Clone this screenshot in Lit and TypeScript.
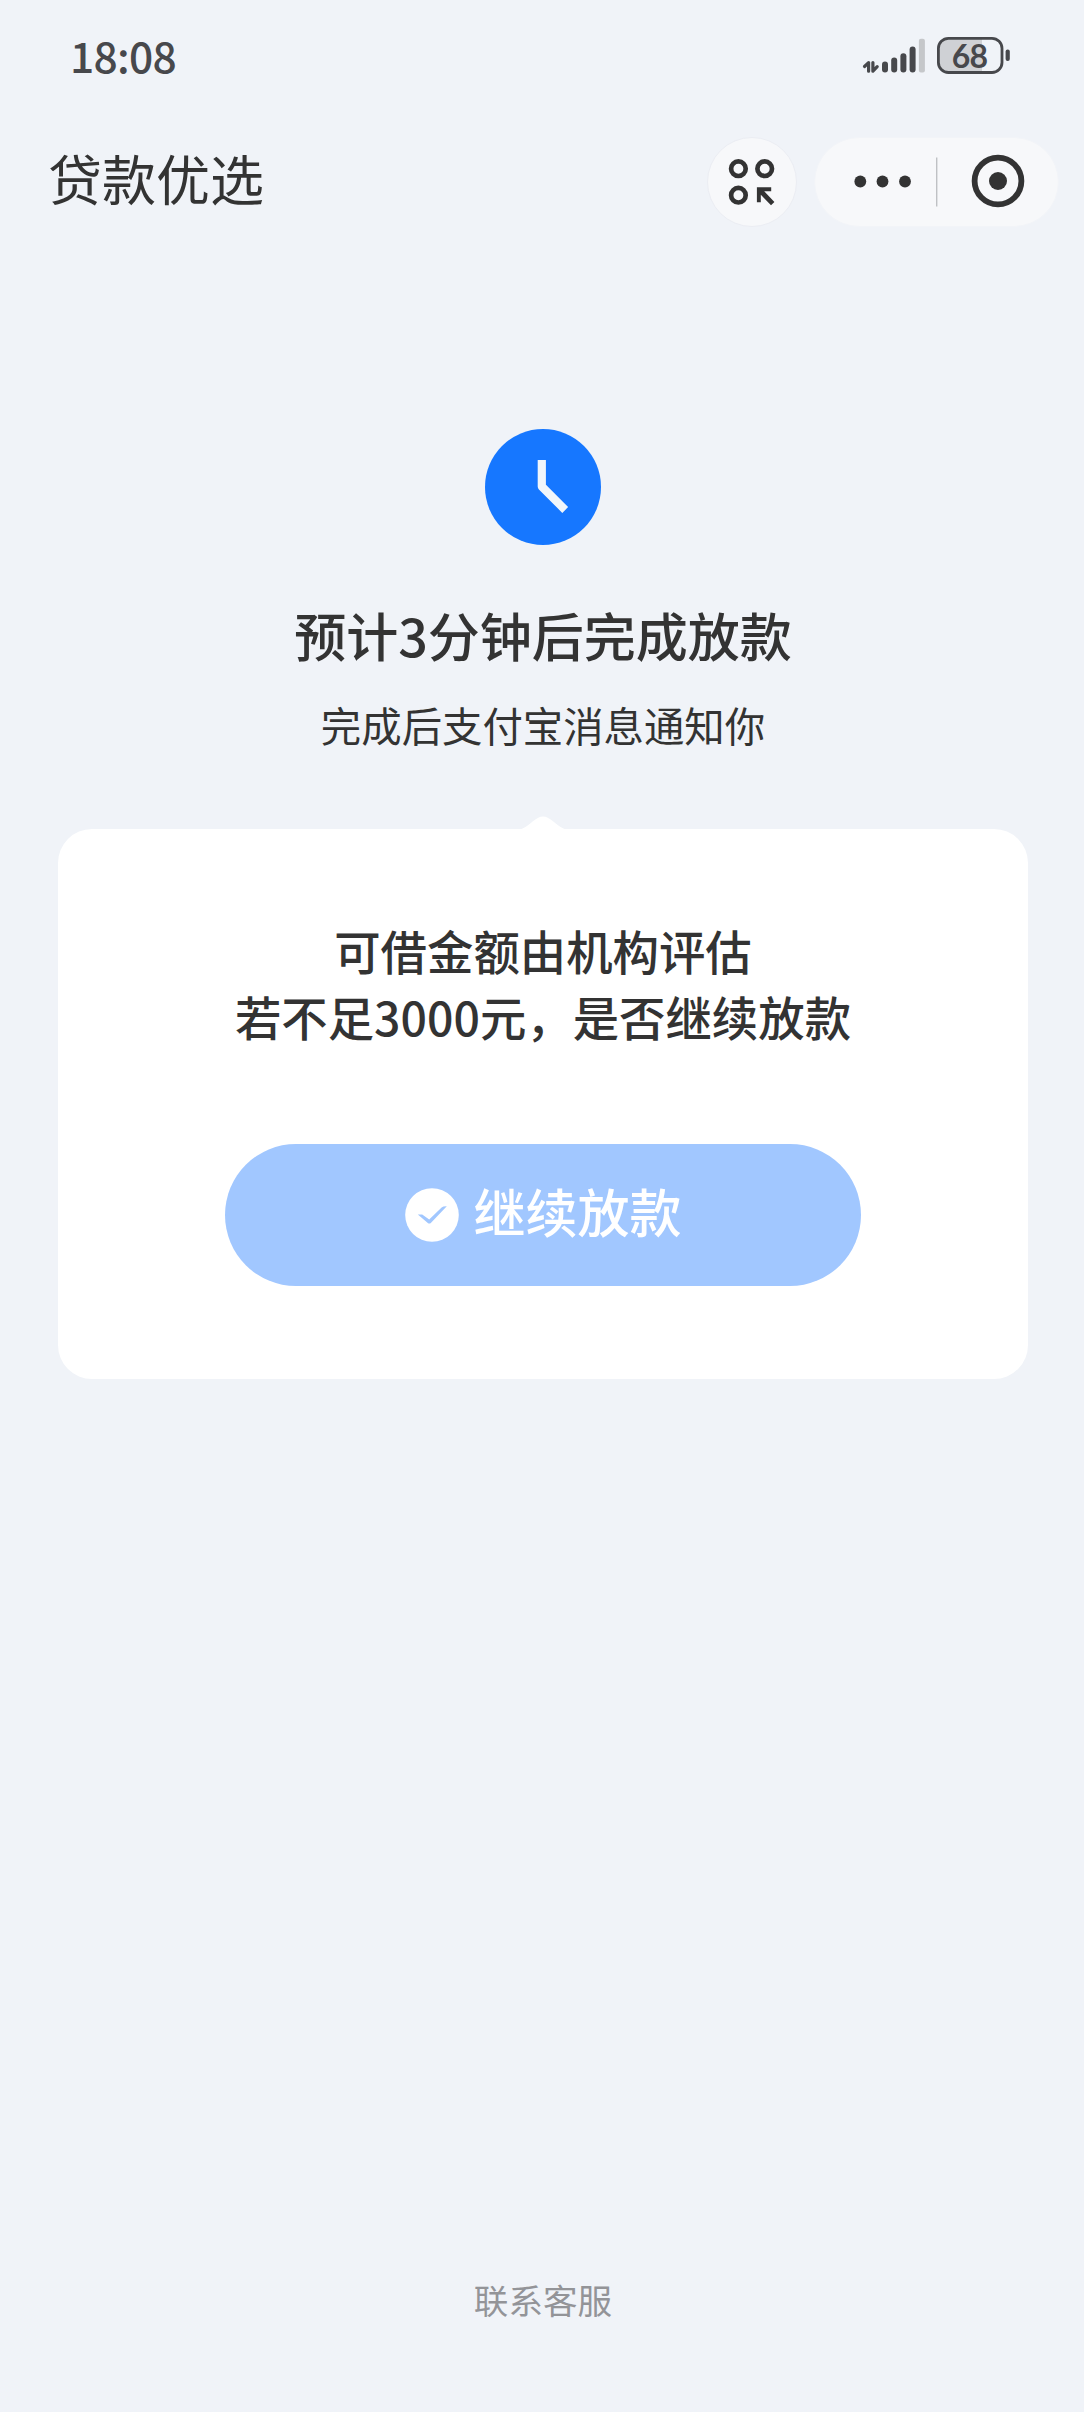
import { LitElement, html, css } from "lit";
import { customElement, property } from "lit/decorators.js";

@customElement("status-bar")
class StatusBar extends LitElement {
  @property() time = "18:08";
  @property() battery = "68";

  static styles = css`
    :host {
      display: flex;
      justify-content: space-between;
      height: 112px;
      box-sizing: border-box;
      padding: 26px 73px 0 70px;
      color: #47484c;
    }
    .time {
      font-size: 42.5px;
      line-height: 58px;
      font-weight: 500;
      letter-spacing: -0.7px;
    }
    .system {
      display: flex;
      padding-top: 10px;
    }
    .signal {
      width: 64px;
      height: 38px;
      margin-right: 11px;
    }
    .battery {
      display: grid;
      width: 74px;
      height: 38px;
    }
    .battery > * {
      grid-area: 1 / 1;
    }
    .level {
      width: 65px;
      text-align: center;
      font: 700 32px/39px Lato, "Liberation Sans", sans-serif;
      letter-spacing: -0.8px;
    }
  `;

  render() {
    return html`
      <span class="time">${this.time}</span>
      <div class="system">
        <svg class="signal" viewBox="0 0 64 38" fill="#47484c">
          <path
            d="M2.5 30.5 6.600 26.600V35.200M10.900 26.600V35.200L15.200 30.600"
            fill="none"
            stroke="#47484c"
            stroke-width="3.2"
            stroke-linecap="round"
            stroke-linejoin="round"
          />
          <rect x="20" y="25.5" width="6" height="11" rx="3" />
          <rect x="29.2" y="21.5" width="6" height="15" rx="3" />
          <rect x="38.4" y="17.3" width="6" height="19.2" rx="3" />
          <rect x="47.6" y="10.5" width="6" height="26" rx="3" />
          <rect x="56.9" y="2.7" width="6" height="33.8" rx="2" fill="#c5c7ca" />
        </svg>
        <div class="battery">
          <svg width="74" height="38" viewBox="0 0 74 38">
            <path d="M10 2.5H45V36H10Q2 36 2 27V11Q2 2.5 10 2.5Z" fill="#cfd1d5" />
            <rect
              x="1.4" y="2.3" width="63.6" height="34.2" rx="10"
              fill="none" stroke="#47484c" stroke-width="2.8"
            />
            <rect x="68.6" y="13.6" width="4.2" height="11.4" rx="2" fill="#47484c" />
          </svg>
          <span class="level">${this.battery}</span>
        </div>
      </div>
    `;
  }
}

@customElement("nav-bar")
class NavBar extends LitElement {
  @property() heading = "";

  static styles = css`
    :host {
      display: flex;
      align-items: flex-start;
      height: 144px;
      box-sizing: border-box;
      padding: 25px 25px 0 48px;
    }
    .title {
      flex: 1;
      color: #333;
      font-size: 54px;
      line-height: 82px;
    }
    .round,
    .pill {
      box-sizing: border-box;
      height: 90px;
      border: 1.5px solid #ebedf3;
      border-radius: 45px;
      background: #f7f8fa;
      display: flex;
      align-items: center;
      justify-content: center;
    }
    .round {
      width: 90px;
      margin-right: 17px;
    }
    .pill {
      width: 245px;
      border-color: #f2f4f8;
    }
  `;

  render() {
    return html`
      <span class="title">${this.heading}</span>
      <div class="round">
        <svg width="48" height="48" viewBox="0 0 48 48" fill="none" stroke="#333">
          <g stroke-width="4.7">
            <circle cx="10.4" cy="10.7" r="7.3" />
            <circle cx="36.7" cy="10.7" r="7.3" />
            <circle cx="10.4" cy="37.2" r="7.3" />
          </g>
          <path d="M43.2 29.200V33.200H36.200L46.400 43.900 43 47.300 32.800 36.800V44.300H28.900V29.200Z" fill="#333" stroke="none" />
        </svg>
      </div>
      <div class="pill">
        <svg width="240" height="84" viewBox="0 0 240 84" fill="#333">
          <circle cx="43.3" cy="41.5" r="5.9" />
          <circle cx="65.5" cy="41.5" r="5.9" />
          <circle cx="88" cy="41.5" r="5.9" />
          <rect x="119" y="17.5" width="1.4" height="49" fill="#bfc1c4" />
          <circle cx="181" cy="41" r="23.4" fill="none" stroke="#333" stroke-width="5.8" />
          <circle cx="181" cy="41" r="9" />
        </svg>
      </div>
    `;
  }
}

@customElement("loan-card")
class LoanCard extends LitElement {
  static styles = css`
    :host {
      display: flex;
      flex-direction: column;
      align-items: center;
      position: relative;
      width: 970px;
      height: 550px;
      box-sizing: border-box;
      padding-top: 88px;
      border-radius: 34px;
      background: #fff;
    }
    .notch {
      position: absolute;
      top: -13px;
      left: 461px;
    }
    .question {
      margin: 0;
      color: #333;
      font-size: 46.4px;
      line-height: 66px;
      font-weight: 500;
      text-align: center;
      white-space: nowrap;
    }
    .confirm {
      display: flex;
      align-items: center;
      justify-content: center;
      gap: 14px;
      width: 636px;
      height: 142px;
      margin-top: 95px;
      padding: 0 0 1px 1px;
      box-sizing: border-box;
      border: 0;
      border-radius: 71px;
      background: #a1c7ff;
      color: #fff;
      font-family: inherit;
      font-size: 52px;
      font-weight: 500;
      line-height: 76px;
    }
    .check {
      margin-top: 1px;
    }
    .label {
      padding-bottom: 7px;
    }
  `;

  render() {
    return html`
      <svg class="notch" width="48" height="14" viewBox="0 0 48 14">
        <path d="M0 14C5 12.500 9 9.500 13 6Q19 .4 24 .4T35 6C39 9.500 43 12.500 48 14Z" fill="#fff" />
      </svg>
      <p class="question">可借金额由机构评估<br />若不足3000元，是否继续放款</p>
      <button class="confirm">
        <svg class="check" width="54" height="54" viewBox="0 0 54 54">
          <circle cx="27" cy="27" r="26.8" fill="#fff" />
          <path
            d="M12.800 26.400H17.200L24.200 31.500 36.600 19.600Q38 18.200 41.800 18.300L25.800 34.900Q24.300 36.300 22.800 34.900Z"
            fill="#a1c7ff"
          />
        </svg>
        <span class="label">继续放款</span>
      </button>
    `;
  }
}

@customElement("app-root")
class AppRoot extends LitElement {
  static styles = css`
    :host {
      display: flex;
      flex-direction: column;
      width: 1084px;
      height: 2412px;
      background: #f0f3f8;
      font-family: "Noto Sans CJK SC", sans-serif;
    }
    .content {
      flex: 1;
      display: flex;
      flex-direction: column;
      align-items: center;
      padding: 173px 56px 0 58px;
      color: #333;
    }
    .clock {
      display: block;
    }
    .headline {
      margin: 52px 0 0;
      font-size: 52px;
      line-height: 76px;
      font-weight: 500;
    }
    .note {
      margin: 22px 0 0;
      font-size: 40.4px;
      line-height: 60px;
    }
    .card {
      margin-top: 74px;
    }
    .support {
      margin-top: auto;
      margin-bottom: 87px;
      color: #939498;
      font-size: 34.6px;
      line-height: 52px;
    }
  `;

  render() {
    return html`
      <status-bar></status-bar>
      <nav-bar heading="贷款优选"></nav-bar>
      <main class="content">
        <svg class="clock" width="116" height="116" viewBox="0 0 116 116">
          <circle cx="58" cy="58" r="58" fill="#1677ff" />
          <path
            d="M56.800 31V57.500L80.200 81"
            fill="none" stroke="#f0f6fb" stroke-width="8.2" stroke-linejoin="round"
          />
        </svg>
        <h1 class="headline">预计3分钟后完成放款</h1>
        <p class="note">完成后支付宝消息通知你</p>
        <loan-card class="card"></loan-card>
        <span class="support">联系客服</span>
      </main>
    `;
  }
}
